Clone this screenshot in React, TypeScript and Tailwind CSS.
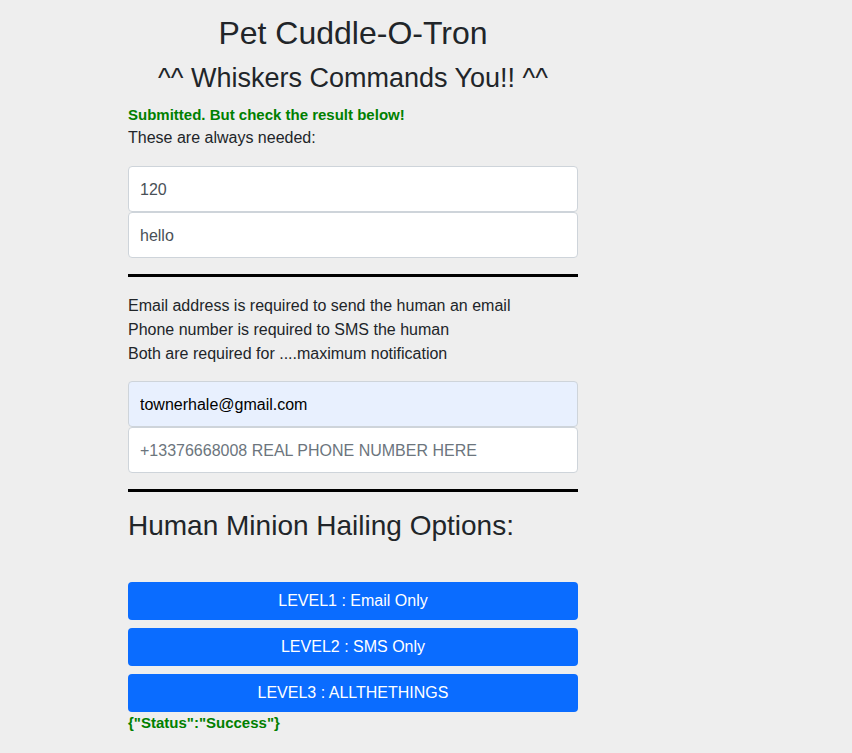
export default function App() {
    return (
        <div className="min-h-[753px] bg-[#eeeeee] text-[#212529] font-['Liberation_Sans',Arial,sans-serif]">
            <div className="ml-[128px] w-[450px] pt-[14px]">
                <h1 className="text-center text-[32px] leading-[38px]">Pet Cuddle-O-Tron</h1>
                <h2 className="text-center text-[27px] leading-[34px] mt-[9px]">^^ Whiskers Commands You!! ^^</h2>
                <p className="mt-[10px] text-[15px] leading-[20px] font-bold text-[#008000]">Submitted. But check the result below!</p>
                <p className="text-[16px] leading-[26px]">These are always needed:</p>

                <div className="mt-[15px] flex flex-col">
                    <input
                        className="h-[46px] w-full rounded-[4px] border border-[#ced4da] bg-white px-[11px] pt-[2px] text-[16px] text-[#495057] outline-none"
                        defaultValue="120"
                    />
                    <input
                        className="h-[46px] w-full rounded-[4px] border border-[#ced4da] bg-white px-[11px] pt-[2px] text-[16px] text-[#495057] outline-none"
                        defaultValue="hello"
                    />
                </div>

                <div className="mt-[16px] h-[3px] bg-black"></div>

                <div className="mt-[17px] text-[16px] leading-[24px]">
                    <p>Email address is required to send the human an email</p>
                    <p>Phone number is required to SMS the human</p>
                    <p>Both are required for ....maximum notification</p>
                </div>

                <div className="mt-[15px] flex flex-col">
                    <input
                        className="h-[46px] w-full rounded-[4px] border border-[#ced4da] bg-[#e8f0fe] px-[11px] pt-[2px] text-[16px] text-black outline-none"
                        defaultValue="townerhale@gmail.com"
                    />
                    <input
                        className="h-[46px] w-full rounded-[4px] border border-[#ced4da] bg-white px-[11px] pt-[2px] text-[16px] outline-none placeholder:text-[#6c757d]"
                        placeholder="+13376668008 REAL PHONE NUMBER HERE"
                    />
                </div>

                <div className="mt-[16px] h-[3px] bg-black"></div>

                <h3 className="mt-[17px] text-[28px] leading-[34px]">Human Minion Hailing Options:</h3>

                <div className="mt-[39px] flex flex-col gap-[8px]">
                    <button className="h-[38px] w-full rounded-[4px] bg-[#0a6cff] text-[16px] text-white">LEVEL1 : Email Only</button>
                    <button className="h-[38px] w-full rounded-[4px] bg-[#0a6cff] text-[16px] text-white">LEVEL2 : SMS Only</button>
                    <button className="h-[38px] w-full rounded-[4px] bg-[#0a6cff] text-[16px] text-white">LEVEL3 : ALLTHETHINGS</button>
                </div>
                <p className="text-[15px] leading-[22px] font-bold text-[#008000]">{'{"Status":"Success"}'}</p>
            </div>
        </div>
    )
}
